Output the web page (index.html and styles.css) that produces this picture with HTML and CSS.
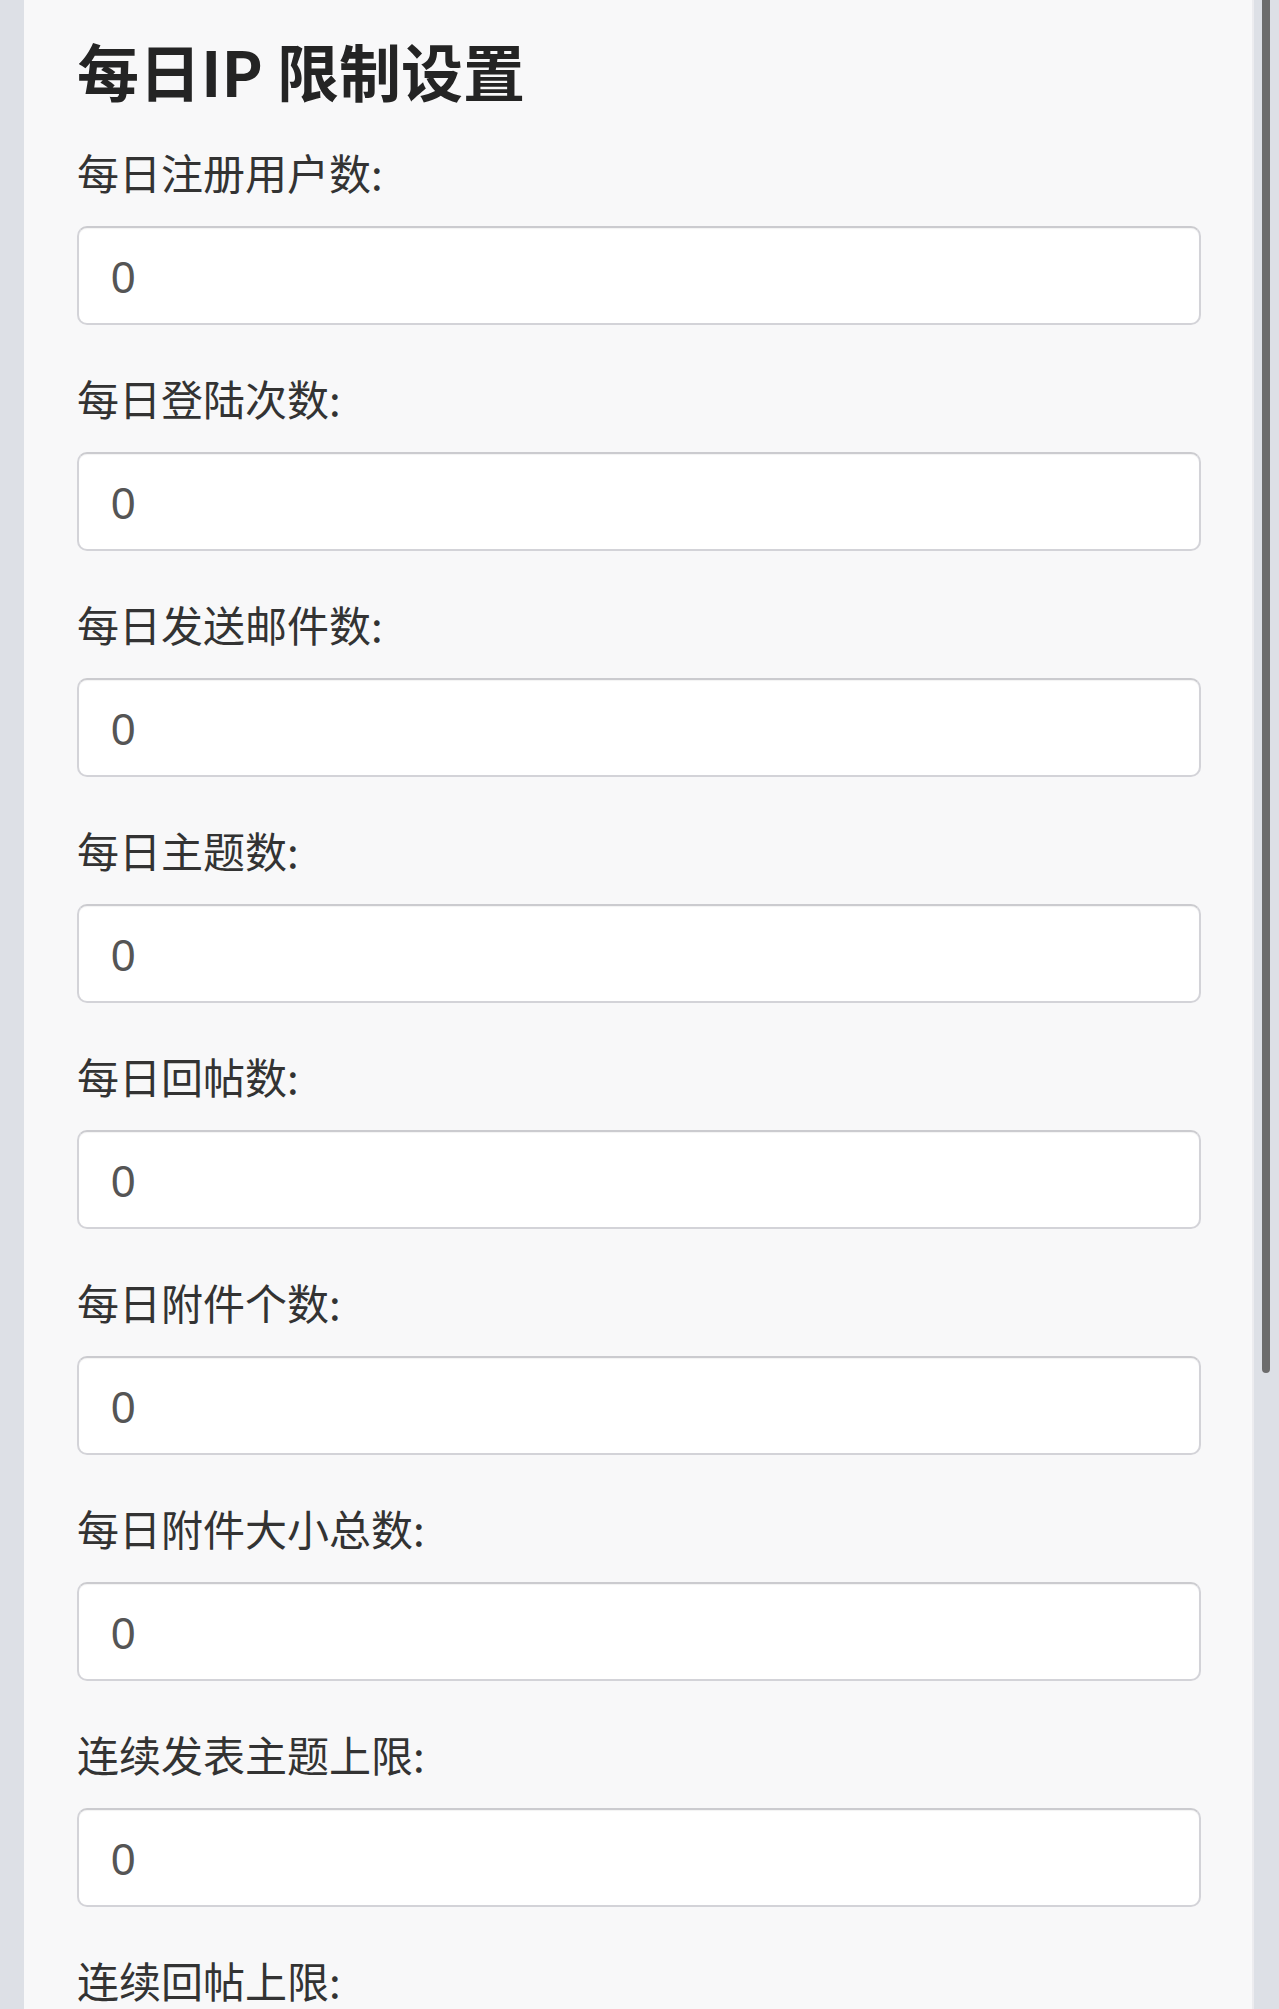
FILE: index.html
```html
<!DOCTYPE html>
<html lang="zh-CN">
<head>
<meta charset="utf-8">
<title>每日IP 限制设置</title>
<link rel="stylesheet" href="styles.css">
</head>
<body>
<div class="page">
  <main class="card">
    <h1 class="title">每日IP 限制设置</h1>
    <div class="field">
      <label class="label">每日注册用户数:</label>
      <input class="input" type="text" value="0">
    </div>
    <div class="field">
      <label class="label">每日登陆次数:</label>
      <input class="input" type="text" value="0">
    </div>
    <div class="field">
      <label class="label">每日发送邮件数:</label>
      <input class="input" type="text" value="0">
    </div>
    <div class="field">
      <label class="label">每日主题数:</label>
      <input class="input" type="text" value="0">
    </div>
    <div class="field">
      <label class="label">每日回帖数:</label>
      <input class="input" type="text" value="0">
    </div>
    <div class="field">
      <label class="label">每日附件个数:</label>
      <input class="input" type="text" value="0">
    </div>
    <div class="field">
      <label class="label">每日附件大小总数:</label>
      <input class="input" type="text" value="0">
    </div>
    <div class="field">
      <label class="label">连续发表主题上限:</label>
      <input class="input" type="text" value="0">
    </div>
    <div class="field field-last">
      <label class="label">连续回帖上限:</label>
    </div>
  </main>
  <div class="scrollbar"></div>
</div>
</body>
</html>
```

FILE: styles.css
```css
html, body {
  margin: 0;
  padding: 0;
  height: 2009px;
  overflow: hidden;
  background: #dde0e6;
}

.page {
  position: relative;
  height: 2009px;
  display: flex;
  overflow: hidden;
}

.card {
  margin-left: 24px;
  width: 1230px;
  box-sizing: border-box;
  padding: 33px 51px 0 53px;
  background: #f8f8f9;
  height: 2009px;
  overflow: hidden;
  border-right: 2px solid #ececef;
}

.title {
  margin: 0 0 36px 0;
  font-family: "Noto Sans CJK SC", "Noto Sans", sans-serif;
  font-size: 62px;
  line-height: 74px;
  font-weight: 700;
  color: #242424;
}

.field {
  display: flex;
  flex-direction: column;
  margin-bottom: 44px;
}

.field-last {
  margin-bottom: 0;
}

.field-last .label {
  margin-bottom: 0;
}

.label {
  display: block;
  font-family: "Noto Sans CJK SC", "Noto Sans", sans-serif;
  font-size: 42px;
  line-height: 58px;
  font-weight: 400;
  color: #333333;
  margin-bottom: 25px;
}

.input {
  display: block;
  width: 100%;
  height: 99px;
  box-sizing: border-box;
  margin: 0;
  padding: 5px 32px 0 32px;
  border: 2px solid #d3d3d8;
  border-top-color: #cbcbcf;
  border-radius: 10px;
  background: #ffffff;
  box-shadow: inset 0 1px 1px rgba(0, 0, 0, 0.05);
  font-family: "Liberation Sans", Arial, sans-serif;
  font-size: 44px;
  color: #555555;
  outline: none;
}

.scrollbar {
  position: absolute;
  left: 1262px;
  top: -6px;
  width: 8px;
  height: 1379px;
  border-radius: 4px;
  background: #6c6c6c;
}
```
